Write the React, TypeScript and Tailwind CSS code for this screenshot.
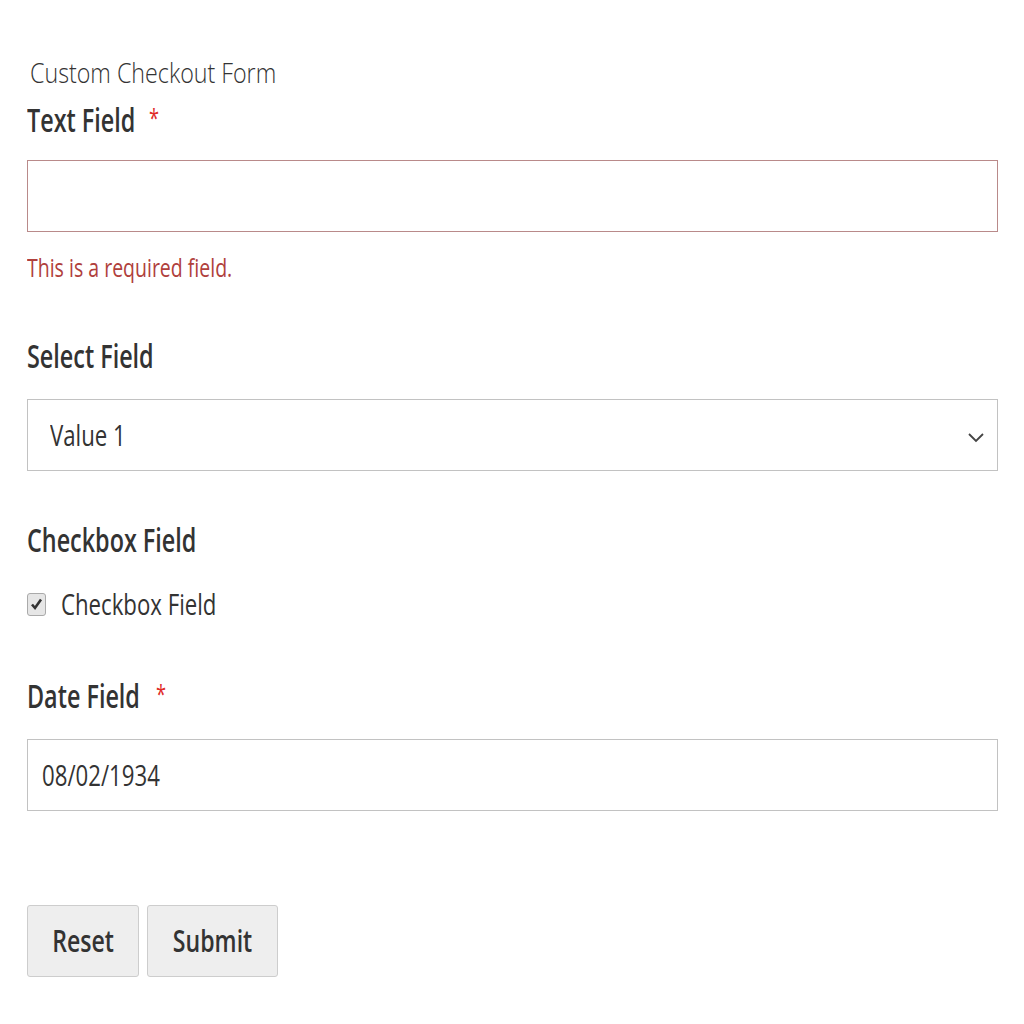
export default function App() {
  const label = "inline-block origin-left scale-x-[0.73] text-[32px] font-semibold text-[#333] leading-none";
  const star = "inline-block origin-left scale-x-[0.7] text-[26px] text-[#e02b27] leading-none";
  const value = "inline-block origin-left scale-x-[0.74] text-[30px] text-[#333] leading-none whitespace-nowrap";
  return (
    <div className="min-h-screen bg-white font-['Open_Sans',sans-serif] pl-[27px] pr-[26px]">
      <div className="h-[58px]" />
      <p className="h-[30px] whitespace-nowrap pl-[3px]">
        <span className="inline-block origin-left scale-x-[0.83] text-[28px] font-light text-[#333] leading-none">Custom Checkout Form</span>
      </p>

      <div className="mt-[16px] h-[30px] flex items-start whitespace-nowrap">
        <span className={label}>Text Field</span>
        <span className={star + " -ml-[26px]"}>*</span>
      </div>
      <div className="mt-[26px] h-[72px] border border-[#b98a8a] bg-white" />
      <p className="mt-[22px] h-[26px] whitespace-nowrap">
        <span className="inline-block origin-left scale-x-[0.75] text-[26px] text-[#b0403c] leading-none">This is a required field.</span>
      </p>

      <div className="mt-[60px] h-[30px] whitespace-nowrap">
        <span className={label}>Select Field</span>
      </div>
      <div className="mt-[29px] h-[72px] border border-[#c2c2c2] flex items-center justify-between pl-[22px] pr-[12px]">
        <span className={value}>Value 1</span>
        <svg width="18" height="14" viewBox="0 0 18 14" className="mt-[4px]">
          <path d="M2 4 L9 11 L16 4" fill="none" stroke="#444" strokeWidth="1.8" />
        </svg>
      </div>

      <div className="mt-[53px] h-[30px] whitespace-nowrap">
        <span className={label}>Checkbox Field</span>
      </div>
      <div className="mt-[35px] flex items-center gap-[15px] whitespace-nowrap">
        <span className="w-[19px] h-[23px] rounded-[3px] border border-[#aaa] bg-[#e6e6e6] flex items-center justify-center">
          <svg width="13" height="14" viewBox="0 0 13 14">
            <path d="M2 7.5 L5 11 L11 2.5" fill="none" stroke="#333" strokeWidth="2.6" />
          </svg>
        </span>
        <span className={value}>Checkbox Field</span>
      </div>

      <div className="mt-[61px] h-[30px] flex items-start whitespace-nowrap">
        <span className={label}>Date Field</span>
        <span className={star + " -ml-[26px]"}>*</span>
      </div>
      <div className="mt-[29px] h-[72px] border border-[#c2c2c2] flex items-center pl-[14px]">
        <span className={value}>08/02/1934</span>
      </div>

      <div className="mt-[94px] flex gap-[8px]">
        <button className="w-[112px] h-[72px] rounded-[3px] border border-[#cdcdcd] bg-[#eee] flex items-center justify-center">
          <span className="inline-block scale-x-[0.77] text-[30px] font-semibold text-[#333] leading-none">Reset</span>
        </button>
        <button className="w-[131px] h-[72px] rounded-[3px] border border-[#cdcdcd] bg-[#eee] flex items-center justify-center">
          <span className="inline-block scale-x-[0.77] text-[30px] font-semibold text-[#333] leading-none">Submit</span>
        </button>
      </div>
    </div>
  );
}
